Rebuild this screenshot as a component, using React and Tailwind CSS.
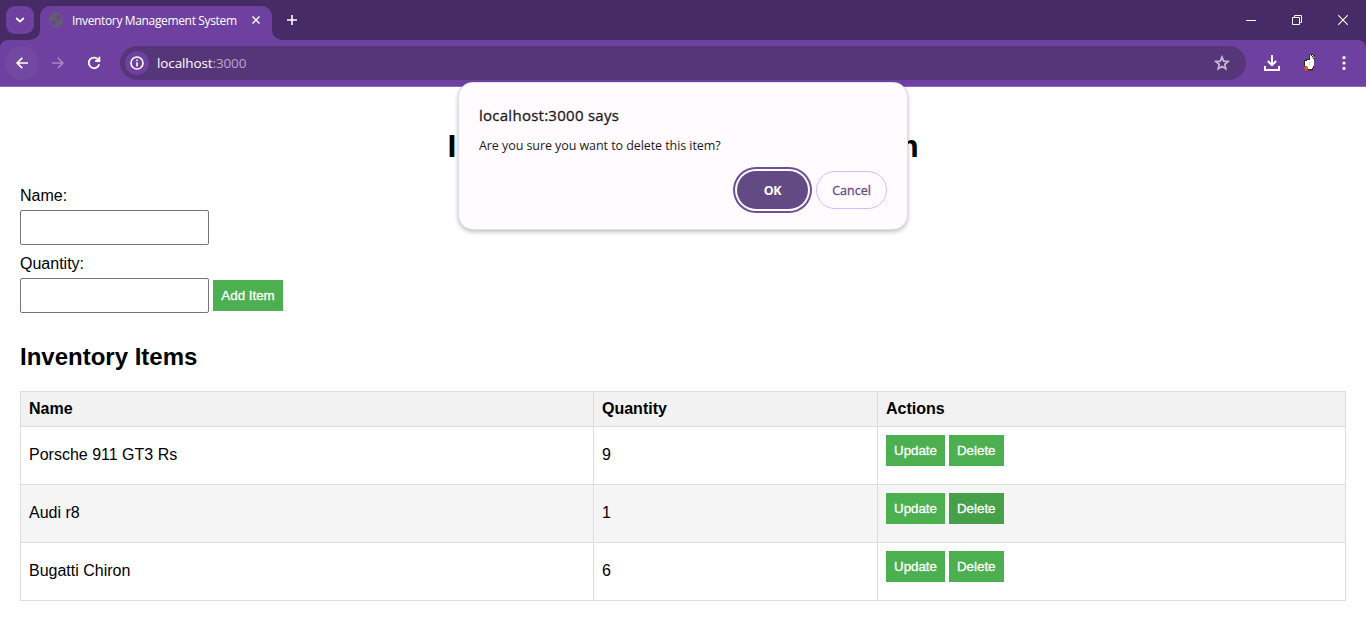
import React from "react";

const UI = "font-['Open_Sans','Noto_Sans',sans-serif]";

const items = [
  { name: "Porsche 911 GT3 Rs", quantity: 9 },
  { name: "Audi r8", quantity: 1, active: true },
  { name: "Bugatti Chiron", quantity: 6 },
];

function TabStrip() {
  return (
    <div className="flex h-10 bg-[#472b66] pt-1.5 pl-1.5">
      <button className="flex size-7 items-center justify-center rounded-[9px] bg-[#6e41a0]">
        <svg width="10" height="6" viewBox="0 0 10 6" fill="none" stroke="#fff" strokeWidth="1.8">
          <path d="M1.2 1 5 4.6 8.800 1" />
        </svg>
      </button>
      <div className="relative ml-1.5 flex w-[232px] items-center rounded-t-[10px] bg-[#6e41a0] pb-1.5 pl-2">
        <svg className="absolute bottom-0 -left-2.5" width="10" height="10" fill="#6e41a0">
          <path d="M10 0v10H0A10 10 0 0 0 10 0Z" />
        </svg>
        <svg className="absolute -right-2.5 bottom-0" width="10" height="10" fill="#6e41a0">
          <path d="M0 0v10h10A10 10 0 0 1 0 0Z" />
        </svg>
        <svg width="16" height="16" viewBox="0 0 16 16">
          <circle cx="8" cy="8" r="7" fill="#5f6368" />
          <path
            d="M2.600 8.200c1.800-.2 3.500.1 4.300 1.100.6.800 1.800.4 2 1.200.2 1-1.200 1.200-1.700 2.900-2.600-.3-4.600-2.500-4.600-5.200ZM8.900 2.700c-.2 1-1.700.8-1.900 1.900-.1 1 1.600.8 1.900 1.700.3 1 1.100 1.600 2.300 1.500.9-.1 1.500.3 2.200.4A5.400 5.400 0 0 0 8.900 2.700Z"
            fill="#6e41a0"
          />
        </svg>
        <span className={`${UI} mt-px ml-2 w-[170px] text-[12px] leading-4 tracking-[-0.35px] whitespace-nowrap text-white`}>
          Inventory Management System
        </span>
        <svg className="ml-[10px]" width="8" height="8" viewBox="0 0 8 8" stroke="#fff" strokeWidth="1.500">
          <path d="m.5.5 7 7m0-7-7 7" />
        </svg>
      </div>
      <svg className="mt-[9px] ml-[15px]" width="10" height="10" viewBox="0 0 10 10" stroke="#fff" strokeWidth="1.600">
        <path d="M5 0v10M0 5h10" />
      </svg>
      <div className="mr-[18px] ml-auto flex h-7 items-center gap-9">
        <svg width="10" height="11" viewBox="0 0 10 11" stroke="#fff">
          <path d="M0 5.500h10" />
        </svg>
        <svg width="10" height="10" viewBox="0 0 10 10" fill="none" stroke="#fff">
          <path d="M.5 2.500h7v7h-7ZM2.500 2.500v-2h7v7h-2" />
        </svg>
        <svg width="10" height="10" viewBox="0 0 10 10" stroke="#fff" strokeWidth="1.100">
          <path d="m.2.200 9.600 9.600m0-9.600-9.600 9.600" />
        </svg>
      </div>
    </div>
  );
}

function Toolbar() {
  return (
    <div className="h-[47px] bg-[#472b66]">
      <div className="flex h-[47px] items-center rounded-t-lg border-b border-[#9068b8] bg-[#6e41a0] pl-[5px]">
        <div className="flex size-[34px] items-center justify-center rounded-full bg-[#7348a3]">
          <svg width="12" height="12" viewBox="0 0 12 12" fill="none" stroke="#fff" strokeWidth="1.700">
            <path d="M12 6H1.500M6.300.8 1.100 6l5.200 5.200" />
          </svg>
        </div>
        <svg className="ml-[13px]" width="12" height="12" viewBox="0 0 12 12" fill="none" stroke="#a487c4" strokeWidth="1.600">
          <path d="M0 6h10.500M5.700.8 10.900 6l-5.200 5.200" />
        </svg>
        <svg className="ml-[23px]" width="14" height="14" viewBox="0 0 14 14" fill="none" stroke="#fff" strokeWidth="1.800">
          <path d="M12.200 8.200A5.300 5.300 0 1 1 11.600 4.200M12.400.8V5H8.200" />
        </svg>
        <div className="ml-[19px] flex h-[34px] w-[1126px] items-center rounded-full bg-[#563678] pl-[5px]">
          <div className="flex size-6 items-center justify-center rounded-full bg-[#6e41a0]">
            <svg width="14" height="14" viewBox="0 0 14 14" fill="none" stroke="#fff" strokeWidth="1.600">
              <circle cx="7" cy="7" r="6" />
              <path d="M7 6.200v4.200M7 3.500v1.600" />
            </svg>
          </div>
          <span className={`${UI} ml-2 text-[13.500px] leading-5 tracking-[-0.12px] text-white`}>
            localhost<span className="text-[#b9a5cf]">:3000</span>
          </span>
          <svg className="mr-4 ml-auto" width="16" height="16" viewBox="0 0 16 16" fill="none" stroke="#c6bad3" strokeWidth="1.700">
            <path d="m8 2 1.700 4.100 4.400.4-3.300 2.900 1 4.300L8 11.400l-3.800 2.300 1-4.300-3.300-2.900 4.400-.4Z" />
          </svg>
        </div>
        <svg className="ml-[18px]" width="16" height="16" viewBox="0 0 16 16" fill="none" stroke="#fff" strokeWidth="2">
          <path d="M8 0v10M3.800 6 8 10.200 12.200 6M1 11v4h14v-4" />
        </svg>
        <svg className="ml-[22px]" width="14" height="20" viewBox="0 0 14 20" shapeRendering="crispEdges">
          <path d="M8 1h3v1h2v4h-1v9h-1v2H3v-3H2V7h2V6h3V2h1Z" fill="#302932" />
          <path d="M8 2h3v4h1v7h-1v2h-1v1H5v-1H4v-2H3V8h2V7h3Z" fill="#fff" />
          <path d="M10 3h2v1h1v1h-3Z" fill="#b0a254" />
          <path d="M9 2h1v1H9ZM10 3h1v1h-1Z" fill="#302932" />
          <path d="M7 9h1v3H7Z" fill="#dcd8df" />
          <path d="M5 17h2v1H5ZM8 17h3v1H8Z" fill="#7a2d1c" />
          <path d="M3 13h2v1h1v3H3v-1H2v-2h1Z" fill="#e9581f" />
          <path d="M3 15h1v1H3Z" fill="#8b3216" />
        </svg>
        <svg className="ml-[26px]" width="4" height="14" viewBox="0 0 4 14" fill="#fff">
          <circle cx="2" cy="1.700" r="1.600" />
          <circle cx="2" cy="7" r="1.600" />
          <circle cx="2" cy="12.300" r="1.600" />
        </svg>
      </div>
    </div>
  );
}

function GreenButton({ children, active }) {
  return (
    <button
      className={`h-[31px] px-2 text-[13.333px] leading-[15px] text-white [-webkit-text-stroke:0.3px_white] ${active ? "bg-[#45a049]" : "bg-[#4caf50]"}`}
    >
      {children}
    </button>
  );
}

function TextField({ label, id }) {
  return (
    <div className="flex flex-col">
      <label htmlFor={id} className="h-[18px] leading-[18px]">
        {label}
      </label>
      <input id={id} className="mt-[5px] h-[35px] w-[189px] rounded-[2px] border border-[#767676] bg-white px-2" />
    </div>
  );
}

function ItemsTable() {
  const cell = "border border-[#ddd] px-2 text-left";
  return (
    <table className="w-[1326px] table-fixed border-collapse">
      <colgroup>
        <col className="w-[573px]" />
        <col className="w-[284px]" />
        <col />
      </colgroup>
      <thead>
        <tr className="h-[35px] bg-[#f2f2f2]">
          {["Name", "Quantity", "Actions"].map((heading) => (
            <th key={heading} className={`${cell} leading-[18px] font-bold`}>
              {heading}
            </th>
          ))}
        </tr>
      </thead>
      <tbody>
        {items.map((item) => (
          <tr key={item.name} className="h-[58px] even:bg-[#f5f5f5]">
            <td className={`${cell} pb-0.5`}>{item.name}</td>
            <td className={`${cell} pb-0.5`}>{item.quantity}</td>
            <td className={`${cell} pt-2 align-top`}>
              <div className="flex gap-1">
                <GreenButton>Update</GreenButton>
                <GreenButton active={item.active}>Delete</GreenButton>
              </div>
            </td>
          </tr>
        ))}
      </tbody>
    </table>
  );
}

function ConfirmDialog() {
  return (
    <div
      className={`${UI} absolute top-[83px] left-[459px] flex h-[146px] w-[448px] flex-col rounded-[14px] bg-[#fffbff] px-5 pt-[21px] shadow-[0_0_0_1px_#e2dce4,0_2px_4px_1px_rgba(0,0,0,0.25)]`}
    >
      <h2 className="text-[15px] leading-[22px] font-normal tracking-[0.26px] text-[#1d1b1e] [-webkit-text-stroke:0.3px_#1d1b1e]">
        localhost:3000 says
      </h2>
      <p className="mt-[10px] text-[12.500px] leading-5 tracking-[-0.07px] text-[#1d1b1e]">
        Are you sure you want to delete this item?
      </p>
      <div className="mt-[15px] flex justify-end gap-2">
        <button className="h-[38px] w-[71px] rounded-full bg-[#644a84] pt-0.5 text-[12.500px] font-bold tracking-[-0.3px] text-white shadow-[0_0_0_2px_#fffbff,0_0_0_4px_#6f4d98]">
          OK
        </button>
        <button className="h-[38px] w-[71px] rounded-full border border-[#d9b9ff] pt-0.5 text-[12.500px] text-[#644a84] [-webkit-text-stroke:0.3px_#644a84]">
          Cancel
        </button>
      </div>
    </div>
  );
}

export default function App() {
  return (
    <div className="relative h-[638px] w-[1366px] overflow-hidden bg-white font-['Liberation_Sans',Arial,sans-serif] text-base text-black">
      <TabStrip />
      <Toolbar />
      <main className="flex flex-col px-5 pt-[41px]">
        <h1 className="text-center text-[32px] leading-[37px] font-bold">Inventory Management System</h1>
        <form className="mt-[22px] flex flex-col gap-[10px]">
          <TextField label="Name:" id="name" />
          <div className="flex items-end gap-1">
            <TextField label="Quantity:" id="quantity" />
            <div className="flex w-[70px] flex-col pb-0.5">
              <GreenButton>Add Item</GreenButton>
            </div>
          </div>
        </form>
        <h2 className="mt-[30px] mb-5 text-2xl leading-7 font-bold">Inventory Items</h2>
        <ItemsTable />
      </main>
      <ConfirmDialog />
    </div>
  );
}
